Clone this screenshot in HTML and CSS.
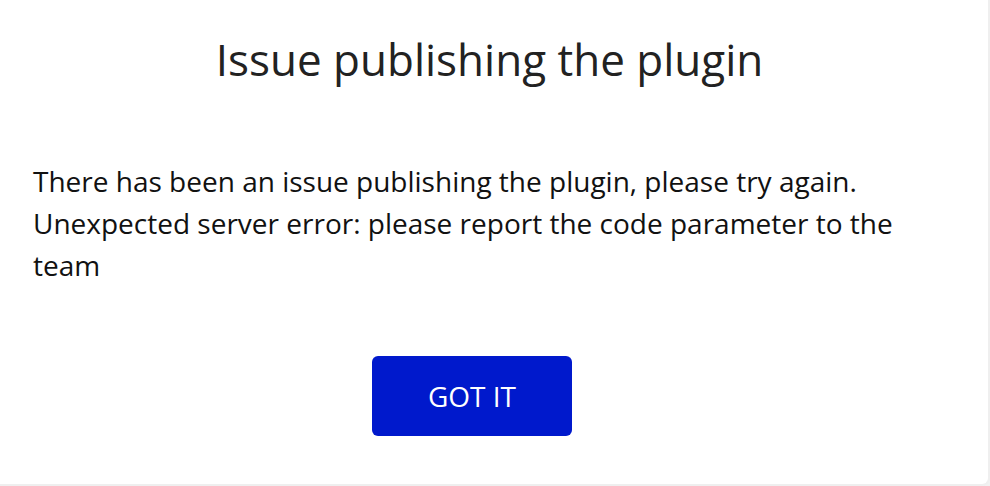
FILE: index.html
```html
<!DOCTYPE html>
<html>
<head>
<meta charset="utf-8">
<link rel="stylesheet" href="styles.css">
</head>
<body>
<div class="card">
  <h1 class="title">Issue publishing the plugin</h1>
  <p class="message">There has been an issue publishing the plugin, please try again. Unexpected server error: please report the code parameter to the team</p>
  <div class="actions">
    <button class="btn">GOT IT</button>
  </div>
</div>
</body>
</html>
```
FILE: styles.css
```css
html, body {
  margin: 0;
  padding: 0;
  background: #f1f1f1;
  font-family: "Open Sans", "Liberation Sans", sans-serif;
}
.card {
  box-sizing: border-box;
  width: 990px;
  height: 486px;
  background: #ffffff;
  border-right: 2px solid #efefef;
  border-bottom: 2px solid #efefef;
  border-bottom-right-radius: 8px;
  padding: 29px 42px 0 33px;
}
.title {
  margin: 0;
  font-size: 44px;
  font-weight: 400;
  line-height: 60px;
  color: #222222;
  text-align: center;
}
.message {
  margin: 71px 0 0 0;
  font-size: 28px;
  line-height: 42px;
  color: #111111;
}
.actions {
  display: flex;
  justify-content: center;
  padding-right: 35px;
  margin-top: 70px;
}
.btn {
  width: 200px;
  height: 80px;
  border: none;
  border-radius: 6px;
  background: #0019cc;
  color: #ffffff;
  font-family: "Open Sans", "Liberation Sans", sans-serif;
  font-size: 28px;
  padding: 0;
}
```
